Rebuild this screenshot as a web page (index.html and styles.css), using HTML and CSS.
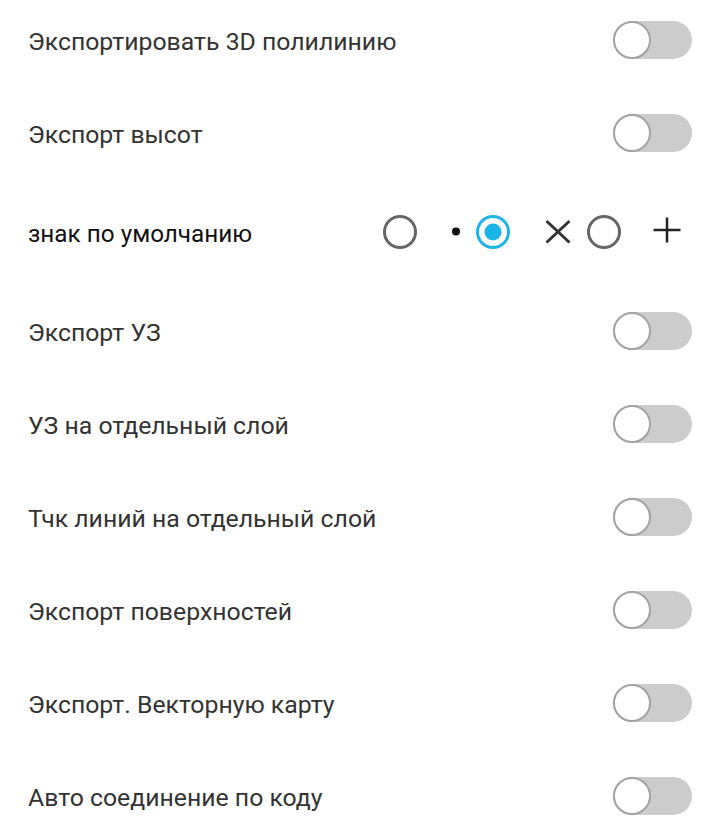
FILE: index.html
```html
<!DOCTYPE html>
<html lang="ru">
<head>
  <meta charset="UTF-8" />
  <meta name="viewport" content="width=device-width, initial-scale=1.0" />
  <title>Настройки экспорта</title>
  <link rel="stylesheet" href="styles.css">
</head>
<body>

  <!-- Export settings -->
  <div class="settings">
    <div class="row">
      <span class="label">Экспортировать 3D полилинию</span>
      <label class="switch"><input type="checkbox"><span class="knob"></span></label>
    </div>

    <div class="row">
      <span class="label">Экспорт высот</span>
      <label class="switch"><input type="checkbox"><span class="knob"></span></label>
    </div>

    <!-- default point marker -->
    <div class="row row-tall">
      <span class="label dark">знак по умолчанию</span>
      <div class="markers">
        <span class="marker m-circle">
          <svg width="34" height="34" viewBox="0 0 34 34"><circle cx="17" cy="17" r="15.5" fill="none" stroke="#666" stroke-width="3"/></svg>
        </span>
        <span class="marker m-dot">
          <svg width="34" height="34" viewBox="0 0 34 34"><circle cx="17" cy="16.5" r="4" fill="#111"/></svg>
        </span>
        <span class="marker m-selected">
          <svg width="34" height="34" viewBox="0 0 34 34"><circle cx="17" cy="17" r="15.5" fill="none" stroke="#1ab4e6" stroke-width="3"/><circle cx="17" cy="17" r="8.5" fill="#1ab4e6"/></svg>
        </span>
        <span class="marker m-cross">
          <svg width="34" height="34" viewBox="0 0 34 34"><path d="M5.5 6 L28.5 27.5 M28.5 6 L5.5 27.5" stroke="#333" stroke-width="3" fill="none"/></svg>
        </span>
        <span class="marker m-ring">
          <svg width="34" height="34" viewBox="0 0 34 34"><circle cx="17" cy="17" r="15.5" fill="none" stroke="#666" stroke-width="3"/></svg>
        </span>
        <span class="marker m-plus">
          <svg width="34" height="34" viewBox="0 0 34 34"><path d="M3.5 15 H30.5 M17 2.5 V27.5" stroke="#222" stroke-width="2.5" fill="none"/></svg>
        </span>
      </div>
    </div>

    <div class="row">
      <span class="label">Экспорт УЗ</span>
      <label class="switch"><input type="checkbox"><span class="knob"></span></label>
    </div>

    <div class="row">
      <span class="label">УЗ на отдельный слой</span>
      <label class="switch"><input type="checkbox"><span class="knob"></span></label>
    </div>

    <div class="row">
      <span class="label">Тчк линий на отдельный слой</span>
      <label class="switch"><input type="checkbox"><span class="knob"></span></label>
    </div>

    <div class="row">
      <span class="label">Экспорт поверхностей</span>
      <label class="switch"><input type="checkbox"><span class="knob"></span></label>
    </div>

    <div class="row">
      <span class="label">Экспорт. Векторную карту</span>
      <label class="switch"><input type="checkbox"><span class="knob"></span></label>
    </div>

    <div class="row">
      <span class="label">Авто соединение по коду</span>
      <label class="switch"><input type="checkbox"><span class="knob"></span></label>
    </div>
  </div>

</body>
</html>
```

FILE: styles.css
```css
* { box-sizing: border-box; }

html, body {
  margin: 0;
  padding: 0;
  background: #fff;
  font-family: Roboto, 'Noto Sans', sans-serif;
  overflow: hidden;
}

.settings {
  margin-top: -7px;
}

.row {
  display: flex;
  align-items: center;
  justify-content: space-between;
  height: 93px;
  padding: 0 28px 0 28px;
}

.row-tall { height: 105px; }

.label {
  font-size: 24.8px;
  line-height: 30px;
  padding-top: 4px;
  color: #333;
}

.label.dark {
  font-size: 24.3px;
  color: #111;
}

/* toggle */
.switch {
  position: relative;
  display: block;
  width: 79px;
  height: 38px;
  border-radius: 19px;
  background: #ccc;
  cursor: pointer;
}

.switch input { display: none; }

.knob {
  position: absolute;
  top: 0; left: 0;
  width: 38px;
  height: 38px;
  border-radius: 50%;
  background: #fff;
  border: 2px solid #a3a3a3;
}

/* marker picker */
.markers {
  display: flex;
  align-items: center;
  margin-right: 8px;
}

.marker {
  display: block;
  width: 34px;
  height: 34px;
}

.marker svg { display: block; }

.m-dot { margin-left: 22px; }
.m-selected { margin-left: 3px; }
.m-cross { margin-left: 31px; }
.m-ring { margin-left: 12px; }
.m-plus { margin-left: 29px; }
```
